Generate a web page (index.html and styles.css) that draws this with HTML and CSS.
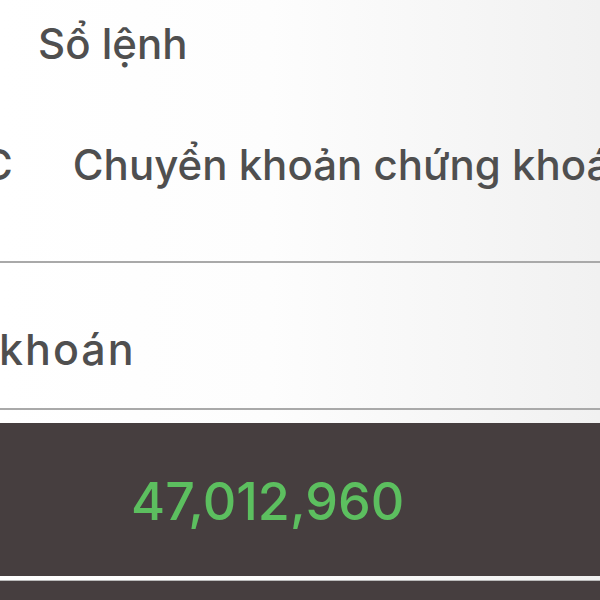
FILE: index.html
```html
<!DOCTYPE html>
<html lang="vi">
<head>
    <meta charset="UTF-8">
    <meta name="viewport" content="width=device-width, initial-scale=1.0">
    <title>Sổ lệnh</title>
    <link rel="stylesheet" href="styles.css">
</head>
<body>

<!-- Menu phía trên -->
<div class="menu">
    <div class="menu-row first">
        <span class="menu-item">Sổ lệnh</span>
    </div>
    <div class="menu-row second">
        <span class="menu-cut">C</span>
        <span class="menu-item">Chuyển khoản chứng khoán</span>
    </div>
</div>

<!-- Dòng tài khoản -->
<div class="account-row">
    <span class="account-label">khoán</span>
</div>

<!-- Bảng số dư -->
<div class="balance">
    <div class="balance-value">47,012,960</div>
</div>
<div class="balance-next"></div>

</body>
</html>
```

FILE: styles.css
```css
body {
    margin: 0;
    padding: 0;
    width: 600px;
    height: 600px;
    overflow: hidden;
    font-family: 'Inter', 'Liberation Sans', Arial, sans-serif;
    font-weight: 500;
    background: linear-gradient(90deg, #ffffff 0%, #fdfdfd 45%, #f1f1f1 100%);
    color: #4f4f4f;
}

/* Menu */
.menu {
    height: 261px;
    border-bottom: 2px solid #a9a9a9;
    box-sizing: content-box;
}

.menu-row {
    display: flex;
    font-size: 42px;
    line-height: 60px;
    white-space: nowrap;
}

.menu-row.first {
    padding-top: 14px;
    padding-left: 38px;
}

.menu-row.second {
    margin-top: 61px;
}

.menu-cut {
    margin-left: -18px;
    margin-right: 60px;
}

/* Tài khoản */
.account-row {
    height: 147px;
    border-bottom: 2px solid #a9a9a9;
    box-sizing: border-box;
    padding-top: 56px;
    font-size: 43px;
    line-height: 60px;
    white-space: nowrap;
}

.account-label {
    margin-left: -1px;
    letter-spacing: 2px;
}

/* Số dư */
.balance {
    margin-top: 13px;
    height: 153px;
    background: #463e3f;
    padding-top: 49px;
    padding-left: 131px;
    box-sizing: border-box;
}

.balance-value {
    font-size: 52px;
    line-height: 60px;
    color: #5cbf5f;
}

.balance-next {
    margin-top: 4px;
    height: 20px;
    background: #463e3f;
    border-top: 1px solid #bbb;
}
```
